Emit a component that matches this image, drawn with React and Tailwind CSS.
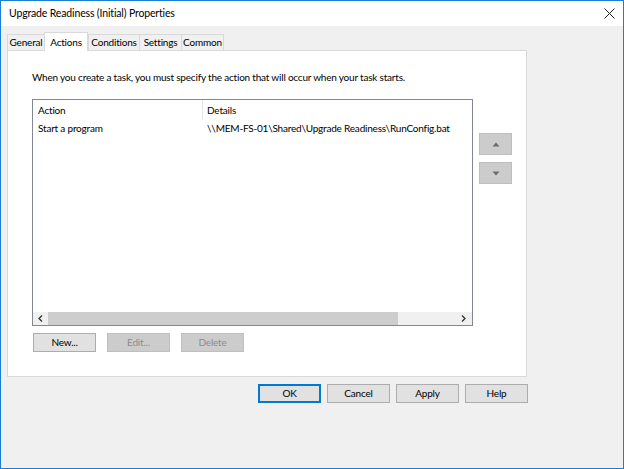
import React from "react";

const tabs = [
  { label: "General", w: "w-[38px]" },
  { label: "Actions", w: "w-[44px]", active: true },
  { label: "Conditions", w: "w-[52px]" },
  { label: "Settings", w: "w-[43px]" },
  { label: "Common", w: "w-[43px]" },
];

function Button({ label, disabled, primary }) {
  return (
    <div
      className={
        "flex h-[19px] w-[63px] items-center justify-center border " +
        (disabled
          ? "border-[#bfbfbf] bg-[#cccccc] text-[#8d8d8d]"
          : primary
          ? "border-[#0078d7] bg-[#e1e1e1] text-black shadow-[inset_0_0_0_1px_#0078d7]"
          : "border-[#adadad] bg-[#e1e1e1] text-black")
      }
    >
      {label}
    </div>
  );
}

function MoveButton({ up }) {
  return (
    <div className="flex h-[22px] w-[33px] items-center justify-center border border-[#bfbfbf] bg-[#cccccc]">
      <svg width="8" height="5" viewBox="0 0 8 5">
        {up ? (
          <path d="M4 0.5 L7.5 4.5 L0.5 4.5 Z" fill="#6d6d6d" />
        ) : (
          <path d="M0.5 0.5 L7.5 0.5 L4 4.5 Z" fill="#6d6d6d" />
        )}
      </svg>
    </div>
  );
}

export default function App() {
  return (
    <div className="flex h-[469px] w-[624px] flex-col border border-[#1a7fd4] bg-[#f0f0f0] font-['Lato',sans-serif] text-[10px] tracking-[-0.2px] text-black">
      {/* Title bar */}
      <header className="flex h-[25px] shrink-0 items-center justify-between bg-white pl-[8px] pr-[8px]">
        <span className="text-[10.5px] tracking-[-0.15px]">Upgrade Readiness (Initial) Properties</span>
        <svg width="11" height="11" viewBox="0 0 11 11">
          <path d="M0.5 0.5 L10.5 10.5 M10.5 0.5 L0.5 10.5" stroke="#222" strokeWidth="1" />
        </svg>
      </header>

      <div className="flex flex-1 flex-col pl-[6px] pt-[6px]">
        {/* Tabs */}
        <div className="flex h-[18px] items-end">
          {tabs.map((t) =>
            t.active ? (
              <div
                key={t.label}
                className={`${t.w} relative z-10 -mb-px flex h-[19px] items-center justify-center whitespace-nowrap border border-b-0 border-[#d9d9d9] bg-white`}
              >
                {t.label}
              </div>
            ) : (
              <div
                key={t.label}
                className={`${t.w} -mr-px flex h-[16px] items-center justify-center whitespace-nowrap border border-b-0 border-[#d9d9d9] bg-[#f0f0f0]`}
              >
                {t.label}
              </div>
            )
          )}
        </div>

        {/* Panel */}
        <section className="flex h-[327px] w-[520px] flex-col border border-[#d9d9d9] bg-white pl-[24px] pt-[18px]">
          <p className="h-[16px] whitespace-nowrap leading-[16px]">
            When you create a task, you must specify the action that will occur when your task starts.
          </p>

          <div className="mt-[14px] flex gap-[6px]">
            {/* List */}
            <div className="flex h-[227px] w-[441px] flex-col border border-[#828790] bg-white">
              <div className="flex h-[20px] items-center">
                <div className="flex h-full w-[170px] items-center border-r border-[#e5e5e5] pl-[5px]">Action</div>
                <div className="pl-[4px]">Details</div>
              </div>
              <div className="flex h-[16px] items-center whitespace-nowrap">
                <div className="w-[170px] shrink-0 pl-[5px]">Start a program</div>
                <div className="pl-[4px]">\\MEM-FS-01\Shared\Upgrade Readiness\RunConfig.bat</div>
              </div>
              <div className="flex-1" />
              {/* Horizontal scrollbar */}
              <div className="flex h-[13px] items-center bg-[#f0f0f0]">
                <div className="flex h-full w-[15px] items-center justify-center">
                  <svg width="5" height="7" viewBox="0 0 5 7">
                    <path d="M4 0.5 L1 3.5 L4 6.5" stroke="#333" strokeWidth="1.3" fill="none" />
                  </svg>
                </div>
                <div className="h-full w-[350px] bg-[#cdcdcd]" />
                <div className="flex-1" />
                <div className="flex h-full w-[18px] items-center justify-center">
                  <svg width="5" height="7" viewBox="0 0 5 7">
                    <path d="M1 0.5 L4 3.5 L1 6.5" stroke="#333" strokeWidth="1.3" fill="none" />
                  </svg>
                </div>
              </div>
            </div>

            {/* Move buttons */}
            <div className="flex flex-col gap-[7px] pt-[34px]">
              <MoveButton up />
              <MoveButton />
            </div>
          </div>

          <div className="mt-[7px] flex gap-[11px] pl-[1px]">
            <Button label="New..." />
            <Button label="Edit..." disabled />
            <Button label="Delete" disabled />
          </div>
        </section>

        {/* Dialog buttons */}
        <div className="mt-[7px] flex w-[521px] justify-end gap-[6px]">
          <Button label="OK" primary />
          <Button label="Cancel" />
          <Button label="Apply" />
          <Button label="Help" />
        </div>
      </div>
    </div>
  );
}
